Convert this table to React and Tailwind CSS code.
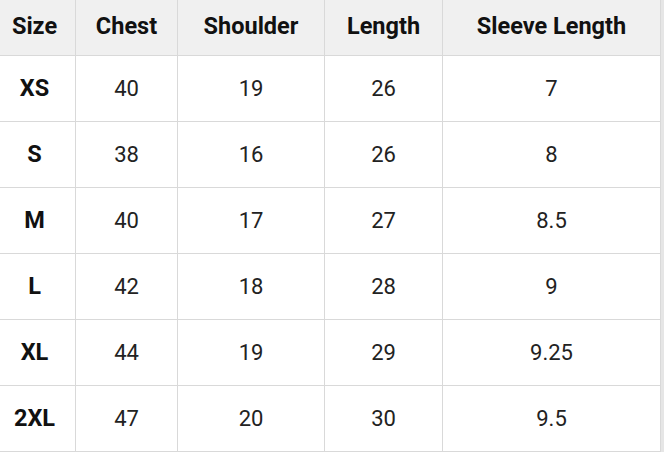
const headers = ['Size', 'Chest', 'Shoulder', 'Length', 'Sleeve Length'];

const rows = [
  ['XS', '40', '19', '26', '7'],
  ['S', '38', '16', '26', '8'],
  ['M', '40', '17', '27', '8.5'],
  ['L', '42', '18', '28', '9'],
  ['XL', '44', '19', '29', '9.25'],
  ['2XL', '47', '20', '30', '9.5'],
];

// first column text sits a little left of centre in the reference
const widths = ['w-[76px] pr-[6px]', 'w-[102px]', 'w-[147px]', 'w-[118px]', 'w-[218px]'];

export default function App() {
  return (
    <div className="w-[664px] h-[453px] bg-white" style={{ fontFamily: 'Roboto, sans-serif' }}>
      <div className="flex w-[664px]">
        <div className="w-[661px]">
          <div className="flex h-[56px] bg-[#f0f0f0]">
            {headers.map((h, i) => (
              <div
                key={h}
                className={`${widths[i]} flex items-center justify-center pb-[2px] border-r border-b border-[#d9d9d9] text-[23.5px] font-bold text-[#111]`}
              >
                {h}
              </div>
            ))}
          </div>
          {rows.map((row) => (
            <div key={row[0]} className="flex h-[66px]">
              {row.map((cell, i) => (
                <div
                  key={i}
                  className={`${widths[i]} flex items-center justify-center border-r border-b border-[#d9d9d9] ${
                    i === 0 ? 'text-[23.5px] font-bold text-[#111]' : 'text-[22px] text-[#222]'
                  }`}
                >
                  {cell}
                </div>
              ))}
            </div>
          ))}
        </div>
        <div className="w-[3px] h-[452px] bg-[#e6e6e6]" />
      </div>
    </div>
  );
}
